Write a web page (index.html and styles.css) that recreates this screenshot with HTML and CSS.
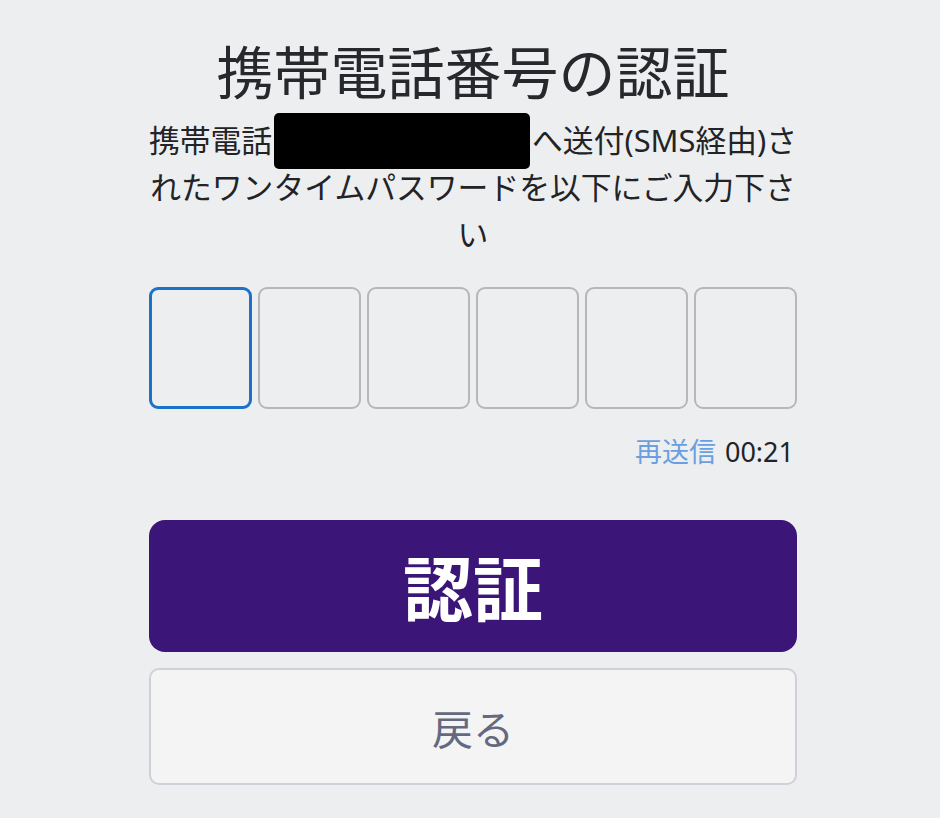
FILE: index.html
```html
<!DOCTYPE html>
<html lang="ja">
<head>
  <meta charset="UTF-8" />
  <title>携帯電話番号の認証</title>
  <meta name="viewport" content="width=device-width, initial-scale=1.0"/>
  <link rel="stylesheet" href="styles.css">
</head>
<body>

  <div class="container">
    <h1 class="title">携帯電話番号の認証</h1>
    <p class="lead">携帯電話<span class="masked"></span>へ送付(SMS経由)されたワンタイムパスワードを以下にご入力下さい</p>

    <div class="otp">
      <input class="otp-box active" type="text" maxlength="1">
      <input class="otp-box" type="text" maxlength="1">
      <input class="otp-box" type="text" maxlength="1">
      <input class="otp-box" type="text" maxlength="1">
      <input class="otp-box" type="text" maxlength="1">
      <input class="otp-box" type="text" maxlength="1">
    </div>

    <div class="resend">
      <a href="#">再送信</a>
      <span class="timer">00:21</span>
    </div>

    <button class="btn-primary">認証</button>
    <button class="btn-back">戻る</button>
  </div>

</body>
</html>
```

FILE: styles.css
```css
body {
  margin: 0;
  background-color: #edeef0;
  color: #222326;
  font-family: "Noto Sans", "Noto Sans CJK JP", sans-serif;
}

.container {
  width: 648px;
  margin-left: 149px;
  padding-top: 30px;
}

.title {
  margin: 0;
  font-size: 57px;
  font-weight: 400;
  line-height: 84px;
  text-align: center;
  color: #26282b;
}

.lead {
  margin: 3px -5px 0;
  font-size: 30.8px;
  line-height: 47px;
  text-align: center;
}

.masked {
  display: inline-block;
  width: 256px;
  height: 56px;
  margin: -11px 2px -5px;
  background: #000;
  border-radius: 5px;
  vertical-align: middle;
}

.otp {
  display: flex;
  gap: 6px;
  margin-top: 29px;
}

.otp-box {
  box-sizing: border-box;
  width: 103px;
  height: 122px;
  border: 2px solid #b6b7b9;
  border-radius: 9px;
  background: transparent;
  outline: none;
}

.otp-box.active {
  border: 3px solid #1c72c8;
}

.resend {
  display: flex;
  justify-content: flex-end;
  gap: 9px;
  margin-top: 26px;
  font-size: 27px;
  line-height: 34px;
}

.resend a {
  color: #6b9fdf;
  text-decoration: none;
}

.timer {
  color: #222326;
  padding-right: 3px;
}

.btn-primary {
  display: block;
  width: 100%;
  height: 132px;
  margin-top: 51px;
  border: none;
  border-radius: 16px;
  background-color: #3b1577;
  color: #ffffff;
  font-family: inherit;
  font-size: 70px;
  font-weight: 700;
  cursor: pointer;
}

.btn-back {
  display: block;
  width: 100%;
  height: 117px;
  margin-top: 16px;
  border: 2px solid #d0d1d8;
  border-radius: 10px;
  background-color: #f4f4f5;
  color: #646980;
  font-family: inherit;
  font-size: 41px;
  cursor: pointer;
}
```
